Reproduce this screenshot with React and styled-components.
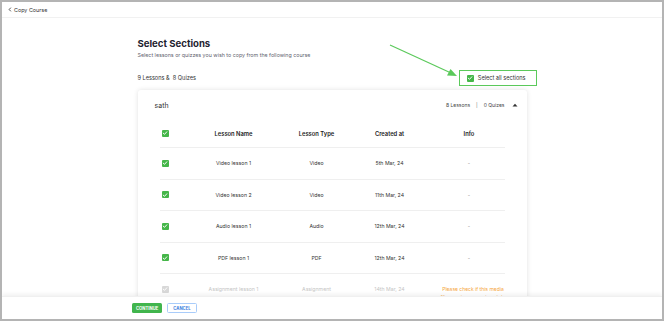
import React from "react";
import styled, { createGlobalStyle } from "styled-components";

const lessons = [
  { name: "Video lesson 1", type: "Video", date: "5th Mar, 24", info: "-" },
  { name: "Video lesson 2", type: "Video", date: "11th Mar, 24", info: "-" },
  { name: "Audio lesson 1", type: "Audio", date: "12th Mar, 24", info: "-" },
  { name: "PDF lesson 1", type: "PDF", date: "12th Mar, 24", info: "-" },
  {
    name: "Assignment lesson 1",
    type: "Assignment",
    date: "14th Mar, 24",
    info: "Please check if this media files are in processing state",
    disabled: true,
  },
];

const columns = ["Lesson Name", "Lesson Type", "Created at", "Info"];

const Check = ({ disabled }) => (
  <Box $disabled={disabled}>
    <svg width="6" height="6" viewBox="0 0 10 10">
      <polyline
        points="2,5.2 4.2,7.2 8,3"
        fill="none"
        stroke="#fff"
        strokeWidth="1.6"
        strokeLinecap="round"
        strokeLinejoin="round"
      />
    </svg>
  </Box>
);

const App = () => {
  return (
    <>
      <GlobalStyle />
      <Frame>
        <TopBar>
          <BackLink>
            <svg width="4" height="5" viewBox="0 0 4 6">
              <polyline points="3,0.8 1,3 3,5.2" fill="none" stroke="#333" strokeWidth="1" />
            </svg>
            Copy Course
          </BackLink>
        </TopBar>

        <Main>
          <Content>
            <Title>Select Sections</Title>
            <Subtitle>Select lessons or quizzes you wish to copy from the following course</Subtitle>

            <SummaryRow>
              <Counts>9 Lessons &amp;&nbsp; 8 Quizes</Counts>
              <SelectAll>
                <Check />
                Select all sections
              </SelectAll>
            </SummaryRow>

            <Card>
              <CardHeader>
                <SectionName>sath</SectionName>
                <Meta>
                  <span>8 Lessons</span>
                  <Sep>|</Sep>
                  <span>0 Quizes</span>
                  <svg width="6" height="4" viewBox="0 0 6 4" style={{ marginLeft: 7 }}>
                    <polygon points="0.5,3.5 3,0.8 5.5,3.5" fill="#333" />
                  </svg>
                </Meta>
              </CardHeader>

              <Table>
                <HeadRow>
                  <Check />
                  {columns.map((c) => (
                    <HeadCell key={c}>{c}</HeadCell>
                  ))}
                </HeadRow>
                {lessons.map((l) => (
                  <Row key={l.name} $disabled={l.disabled}>
                    <Check disabled={l.disabled} />
                    <Cell>{l.name}</Cell>
                    <Cell>{l.type}</Cell>
                    <Cell>{l.date}</Cell>
                    <InfoCell $warn={l.disabled}>{l.info}</InfoCell>
                  </Row>
                ))}
              </Table>
            </Card>
          </Content>

          <Arrow width="80" height="40" viewBox="0 0 80 40">
            <line x1="1" y1="1" x2="62" y2="29" stroke="#5bc95b" strokeWidth="1.2" />
            <polygon points="68,32 58,31.5 61.5,25" fill="#5bc95b" />
          </Arrow>
        </Main>

        <Footer>
          <FooterInner>
            <PrimaryButton>Continue</PrimaryButton>
            <GhostButton>Cancel</GhostButton>
          </FooterInner>
        </Footer>
      </Frame>
    </>
  );
};

export default App;

const GlobalStyle = createGlobalStyle`
  html, body {
    margin: 0;
    padding: 0;
    background: #fff;
  }
  body {
    font-family: "Inter", "Liberation Sans", sans-serif;
    color: #2b2b2b;
  }
`;

const Frame = styled.div`
  width: 664px;
  height: 321px;
  box-sizing: border-box;
  border: 2px solid #b4b4b4;
  display: flex;
  flex-direction: column;
  background: #fff;
  overflow: hidden;
`;

const TopBar = styled.div`
  height: 15px;
  flex: none;
  display: flex;
  align-items: center;
  padding-left: 6px;
  border-bottom: 1px solid #f1f1f1;
`;

const BackLink = styled.div`
  display: flex;
  align-items: center;
  gap: 2px;
  font-size: 5.4px;
  color: #333;
`;

const Main = styled.div`
  flex: 1;
  position: relative;
  overflow: hidden;
`;

const Content = styled.div`
  width: 389px;
  margin: 0 auto;
  padding-top: 20px;
`;

const Title = styled.h1`
  margin: 0;
  font-size: 9.6px;
  line-height: 12px;
  font-weight: 700;
  color: #1f2330;
`;

const Subtitle = styled.p`
  margin: 1px 0 0;
  font-size: 5.3px;
  line-height: 8px;
  color: #5f6370;
`;

const SummaryRow = styled.div`
  display: flex;
  justify-content: space-between;
  align-items: center;
  margin-top: 11px;
  height: 16px;
`;

const Counts = styled.span`
  font-size: 5.6px;
  color: #333;
`;

const SelectAll = styled.label`
  display: flex;
  align-items: center;
  gap: 4px;
  height: 16px;
  box-sizing: border-box;
  padding: 0 10px 0 7px;
  margin-right: -10px;
  border: 1.5px solid #5bc95b;
  font-size: 5.6px;
  color: #333;
`;

const Box = styled.span`
  display: inline-flex;
  align-items: center;
  justify-content: center;
  width: 7px;
  height: 7px;
  border-radius: 1px;
  background: ${(p) => (p.$disabled ? "#d8d8d8" : "#45b649")};
  flex: none;
`;

const Card = styled.div`
  margin-top: 4px;
  background: #fff;
  border-radius: 3px;
  box-shadow: 0 0 5px rgba(0, 0, 0, 0.12);
  padding-bottom: 20px;
`;

const CardHeader = styled.div`
  display: flex;
  justify-content: space-between;
  align-items: center;
  height: 29px;
  padding: 1px 9px 0 17px;
  box-sizing: border-box;
`;

const SectionName = styled.span`
  font-size: 7px;
  color: #333;
`;

const Meta = styled.div`
  display: flex;
  align-items: center;
  font-size: 5px;
  color: #444;
`;

const Sep = styled.span`
  margin: 0 6px;
  color: #777;
`;

const Table = styled.div`
  margin: 0 22px;
`;

const gridCols = "20px 104px 62px 84px 75px";

const HeadRow = styled.div`
  display: grid;
  grid-template-columns: ${gridCols};
  align-items: center;
  height: 28px;
  padding-left: 2px;
  border-bottom: 1px solid #efefef;
`;

const HeadCell = styled.span`
  display: block;
  text-align: center;
  font-size: 5.8px;
  font-weight: 600;
  color: #222222;
`;

const Row = styled.div`
  display: grid;
  grid-template-columns: ${gridCols};
  align-items: center;
  height: 30.5px;
  padding-left: 2px;
  border-bottom: 1px solid #efefef;
  color: ${(p) => (p.$disabled ? "#c4c4c4" : "#333")};
`;

const Cell = styled.div`
  text-align: center;
  font-size: 5.2px;
`;

const InfoCell = styled.div`
  text-align: center;
  font-size: ${(p) => (p.$warn ? "5px" : "5.2px")};
  line-height: 8px;
  color: ${(p) => (p.$warn ? "#f5a53a" : "#888")};
  padding: ${(p) => (p.$warn ? "8px 0 0 8px" : "0")};
`;

const Arrow = styled.svg`
  position: absolute;
  left: 387px;
  top: 26px;
`;

const Footer = styled.div`
  flex: none;
  height: 22px;
  background: #fff;
  box-shadow: 0 -2px 4px rgba(0, 0, 0, 0.06);
  border-top: 1px solid #f0f0f0;
  display: flex;
  align-items: center;
  position: relative;
`;

const FooterInner = styled.div`
  width: 400px;
  margin: 0 auto;
  display: flex;
  gap: 5px;
`;

const PrimaryButton = styled.button`
  height: 10px;
  padding: 0 4px;
  border: none;
  border-radius: 1.5px;
  background: #41b54d;
  color: #fff;
  font-family: inherit;
  font-size: 4.2px;
  font-weight: 700;
  text-transform: uppercase;
`;

const GhostButton = styled.button`
  height: 10px;
  padding: 0 5px;
  border: 1px solid #a9ccfa;
  border-radius: 1.5px;
  background: #fff;
  color: #3b7ddd;
  font-family: inherit;
  font-size: 4.2px;
  font-weight: 700;
  text-transform: uppercase;
`;
